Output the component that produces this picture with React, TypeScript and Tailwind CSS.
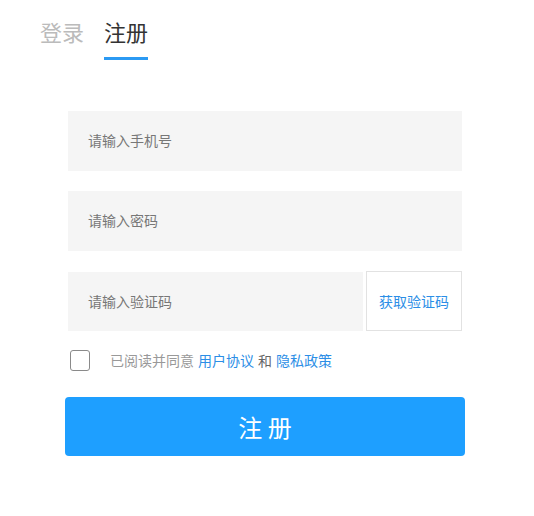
import { useState } from 'react';

export default function App() {
    const [agreed, setAgreed] = useState(false);

    return (
        <div className="w-[534px] h-[516px] bg-white font-['Noto_Sans_CJK_SC','Noto_Sans',sans-serif]">
            {/* tabs */}
            <div className="flex gap-5 pl-10 pt-4">
                <div className="text-[22px] leading-[30px] text-[#bbbbbb]">登录</div>
                <div className="flex flex-col">
                    <div className="text-[22px] leading-[30px] text-[#333333]">注册</div>
                    <div className="mt-[11px] h-[3px] bg-[#2b9af3]" />
                </div>
            </div>

            {/* form */}
            <div className="ml-[65px] mt-[51px] flex w-[400px] flex-col">
                <div className="mx-[3px] flex h-[60px] items-center bg-[#f5f5f5] px-5 pb-px text-[14px] text-[#777777]">
                    请输入手机号
                </div>
                <div className="mx-[3px] mt-5 flex h-[60px] items-center bg-[#f5f5f5] px-5 pb-px text-[14px] text-[#777777]">
                    请输入密码
                </div>
                <div className="mx-[3px] mt-5 flex h-[60px] gap-[3px]">
                    <div className="mt-px flex flex-1 items-center bg-[#f5f5f5] px-5 pb-px text-[14px] text-[#777777]">
                        请输入验证码
                    </div>
                    <button className="flex w-[96px] items-center justify-center border border-[#e2e2e2] bg-white text-[14px] text-[#2b8ee6]">
                        获取验证码
                    </button>
                </div>

                <div className="mt-[19px] ml-[5px] flex h-[21px] items-center gap-5 text-[14px]">
                    <button
                        onClick={() => setAgreed(!agreed)}
                        className="h-[21px] w-[20px] rounded-[3px] border border-[#8a8a8a] bg-white"
                        aria-checked={agreed}
                    />
                    <div className="flex items-center">
                        <span className="text-[#999999]">已阅读并同意</span>
                        <span className="ml-1 text-[#2b8ee6]">用户协议</span>
                        <span className="mx-1 text-[#666666]">和</span>
                        <span className="text-[#2b8ee6]">隐私政策</span>
                    </div>
                </div>

                <button className="mt-[26px] flex h-[59px] w-[400px] items-center justify-center rounded-[4px] bg-[#1e9fff] text-[24px] text-white">
                    注 册
                </button>
            </div>
        </div>
    );
}
